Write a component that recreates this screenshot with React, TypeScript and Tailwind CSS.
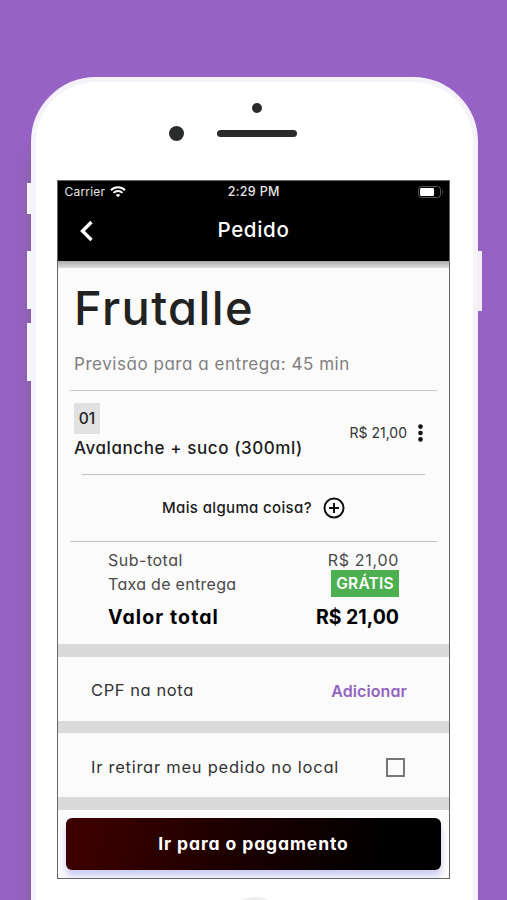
import { ReactNode } from 'react';

type rowProps = {
    children: ReactNode;
    className?: string;
};

const Row = ({ children, className = '' }: rowProps) => (
    <div className={`flex items-center justify-between whitespace-nowrap ${className}`}>{children}</div>
);

const Separator = () => <div className="h-[12.5px] shrink-0 bg-[#dadada]" />;

const StatusBar = () => (
    <div className="grid h-[21px] grid-cols-3 items-center pt-px pr-[6px] pl-[6.5px] text-[12.5px] text-[#e4e4e4]">
        <div className="flex items-center gap-[5px]">
            <span className="text-[12px] tracking-[0.2px] [font-feature-settings:normal]">Carrier</span>
            <svg width="16" height="12" viewBox="0 0 16 12" fill="none" stroke="#fff" strokeWidth="2">
                <path d="M1 4.2a10 10 0 0 1 14 0" />
                <path d="M3.5 6.9a6.4 6.4 0 0 1 9 0" />
                <path d="M8 11.3 5.7 9a3.3 3.3 0 0 1 4.6 0Z" fill="#fff" stroke="none" />
            </svg>
        </div>
        <div className="text-center font-medium tracking-[0.3px] [font-feature-settings:normal]">2:29 PM</div>
        <svg className="justify-self-end" width="25" height="12" viewBox="0 0 25 12" fill="none">
            <rect x="0.5" y="0.5" width="22" height="11" rx="3" stroke="#555" />
            <rect x="2" y="2" width="14" height="8" rx="1.3" fill="#fff" />
            <path d="M24 4.3v3.4c.6-.3 1-.9 1-1.7s-.4-1.4-1-1.7Z" fill="#555" />
        </svg>
    </div>
);

const Header = () => (
    <div className="relative flex h-[59px] items-center justify-center">
        <svg className="absolute left-[20px] top-[18px]" width="16" height="22" viewBox="0 0 16 22" fill="none">
            <path d="M13.5 2 4.5 11l9 9" stroke="#fff" strokeWidth="3.4" />
        </svg>
        <h1 className="pb-[3px] text-[20.5px] font-medium tracking-[0.7px] text-white">Pedido</h1>
    </div>
);

const OrderItem = () => (
    <Row className="mx-4 mt-3 h-[59px]">
        <div>
            <div className="flex h-[31px] w-[26px] items-center justify-center bg-[#e1e1e1] text-[15.5px] font-medium text-[#222]">
                01
            </div>
            <div className="flex h-[28px] items-center pt-[2px] text-[17px] font-medium tracking-[0.58px] text-[#1c1c1c]">
                Avalanche + suco (300ml)
            </div>
        </div>
        <div className="flex items-center gap-[11px] pr-[10px]">
            <span className="text-[14px] text-[#333]">R$ 21,00</span>
            <svg width="5" height="18" viewBox="0 0 5 18" fill="#111">
                <circle cx="2.5" cy="2.6" r="2.3" />
                <circle cx="2.5" cy="9" r="2.3" />
                <circle cx="2.5" cy="15.4" r="2.3" />
            </svg>
        </div>
    </Row>
);

const Totals = () => (
    <div className="pt-2 pr-[50px] pb-[7px] pl-[50px]">
        <Row className="h-[20px] text-[16px] text-[#4a4a4a]">
            <span className="tracking-[0.5px]">Sub-total</span>
            <span className="tracking-[0.7px]">R$ 21,00</span>
        </Row>
        <Row className="h-[27px] text-[16px] text-[#4a4a4a]">
            <span className="tracking-[0.3px]">Taxa de entrega</span>
            <span className="flex h-[27px] w-[68px] items-center justify-center bg-[#4caf50] text-[15.5px] font-semibold tracking-[0.2px] text-white">
                GRÁTIS
            </span>
        </Row>
        <Row className="h-[40px] pt-[2px] text-[19.5px] font-bold text-black">
            <span className="tracking-[1.1px]">Valor total</span>
            <span>R$ 21,00</span>
        </Row>
    </div>
);

const Phone = ({ children }: { children: ReactNode }) => (
    <div className="relative ml-[31px] h-[960px] w-[447px] rounded-[65px] border-[5px] border-[#f6f2f9] bg-white shadow-[-6px_36px_14px_-2px_rgba(125,100,140,0.6)]">
        <div className="absolute top-[101px] -left-[9px] h-[31px] w-[5px] bg-[#f8f5fa]" />
        <div className="absolute top-[169px] -left-[9px] h-[58px] w-[5px] bg-[#f8f5fa]" />
        <div className="absolute top-[241px] -left-[9px] h-[58px] w-[5px] bg-[#f8f5fa]" />
        <div className="absolute top-[169px] -right-[9px] h-[60px] w-[5px] bg-[#f3f0f5]" />
        <div className="flex h-[98px] flex-col items-center pt-[21px]">
            <div className="ml-[4px] size-[10px] rounded-full bg-[#2a2b2b]" />
            <div className="mt-[13px] mr-[44px] flex items-center gap-[33px]">
                <div className="size-[15px] rounded-full bg-[#2a2b2b]" />
                <div className="h-[7px] w-[80px] rounded-full bg-[#2a2b2b]" />
            </div>
        </div>
        {children}
        <div className="mx-auto mt-[18px] size-[64px] rounded-full border-[3px] border-[#eeeeee]" />
    </div>
);

const App = () => {
    return (
        <div className="h-[900px] w-[507px] overflow-hidden bg-[#9662c6] pt-[77px] font-['Inter',sans-serif] [font-feature-settings:'cv11']">
            <Phone>
                <div className="mr-[23px] ml-[21px] flex h-[699px] flex-col overflow-hidden border border-[#666] bg-[#fbfbfb]">
                    <div className="bg-black">
                        <StatusBar />
                        <Header />
                    </div>
                    <div className="h-[7px] shrink-0 bg-linear-to-b from-[#aaa] to-[#dedede]" />

                    <h2 className="flex h-[81px] shrink-0 items-center px-4 text-[47px] font-medium tracking-[1.4px] text-[#222]">
                        Frutalle
                    </h2>
                    <p className="flex h-[31px] shrink-0 items-center px-4 pt-px text-[17px] tracking-[0.54px] text-[#808080]">
                        Previsão para a entrega: 45 min
                    </p>
                    <div className="mx-3 mt-[10px] h-px shrink-0 bg-[#c8c8c8]" />
                    <OrderItem />
                    <div className="mx-6 mt-3 h-px shrink-0 bg-[#c0c0c0]" />
                    <div className="flex h-[66px] shrink-0 items-center justify-center gap-[11px] text-[15px] font-medium tracking-[0.35px] text-[#1c1c1c]">
                        Mais alguma coisa?
                        <svg width="22" height="22" viewBox="0 0 22 22" fill="none" stroke="#111" strokeWidth="2">
                            <circle cx="11" cy="11" r="9.5" />
                            <path d="M11 6v10M6 11h10" />
                        </svg>
                    </div>
                    <div className="mx-3 h-px shrink-0 bg-[#c0c0c0]" />
                    <Totals />

                    <Separator />
                    <Row className="h-[64px] shrink-0 pt-1 pr-[42px] pl-[33px] text-[16.5px]">
                        <span className="tracking-[0.58px] text-[#333]">CPF na nota</span>
                        <span className="text-[16px] font-semibold tracking-[0.1px] text-[#9564c1]">Adicionar</span>
                    </Row>
                    <Separator />
                    <Row className="h-[64px] shrink-0 pt-1 pr-[44px] pl-[33px] text-[16.5px]">
                        <span className="tracking-[0.74px] text-[#333]">Ir retirar meu pedido no local</span>
                        <span className="size-[19px] border-2 border-[#777]" />
                    </Row>
                    <Separator />
                    <button className="mx-2 mt-[8px] h-[52px] shrink-0 rounded-[6px] bg-[linear-gradient(100deg,#3c0000_5%,#1c0000_45%,#000_85%)] pt-[2px] text-[17.5px] font-bold tracking-[0.9px] text-white shadow-[0_6px_6px_rgba(175,175,235,0.6)]">
                        Ir para o pagamento
                    </button>
                </div>
            </Phone>
        </div>
    );
};

export default App;
